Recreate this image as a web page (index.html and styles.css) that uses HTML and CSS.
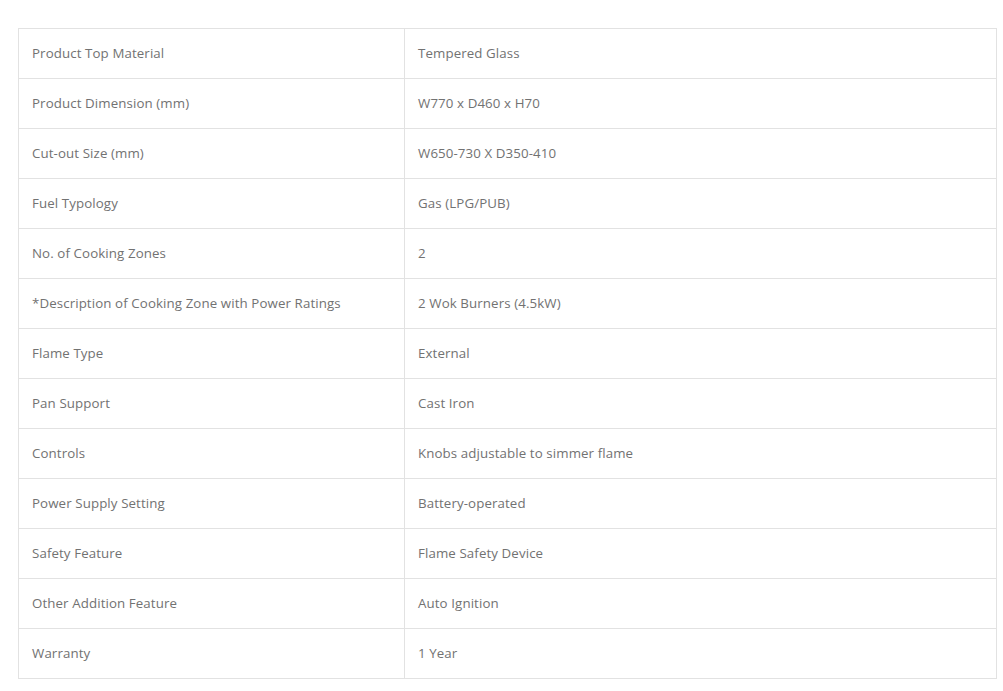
FILE: index.html
```html
<!DOCTYPE html>
<html lang="en">
<head>
    <meta charset="UTF-8">
    <title>Specifications</title>
    <link rel="stylesheet" href="styles.css">
</head>
<body>
<div class="specs">
    <table class="spec-table">
        <colgroup>
            <col class="label-col">
            <col>
        </colgroup>
        <tbody>
        <tr><td>Product Top Material</td><td>Tempered Glass</td></tr>
        <tr><td>Product Dimension (mm)</td><td>W770 x D460 x H70</td></tr>
        <tr><td>Cut-out Size (mm)</td><td>W650-730 X D350-410</td></tr>
        <tr><td>Fuel Typology</td><td>Gas (LPG/PUB)</td></tr>
        <tr><td>No. of Cooking Zones</td><td>2</td></tr>
        <tr><td>*Description of Cooking Zone with Power Ratings</td><td>2 Wok Burners (4.5kW)</td></tr>
        <tr><td>Flame Type</td><td>External</td></tr>
        <tr><td>Pan Support</td><td>Cast Iron</td></tr>
        <tr><td>Controls</td><td>Knobs adjustable to simmer flame</td></tr>
        <tr><td>Power Supply Setting</td><td>Battery-operated</td></tr>
        <tr><td>Safety Feature</td><td>Flame Safety Device</td></tr>
        <tr><td>Other Addition Feature</td><td>Auto Ignition</td></tr>
        <tr><td>Warranty</td><td>1 Year</td></tr>
        </tbody>
    </table>
</div>
</body>
</html>
```

FILE: styles.css
```css
body{
    margin: 0;
    background-color: #ffffff;
    font-family: "Open Sans", "Liberation Sans", sans-serif;
}
.specs{
    padding: 28px 0 0 18px;
}
.spec-table{
    width: 979px;
    border-collapse: collapse;
    table-layout: fixed;
}
.label-col{
    width: 386px;
}
.spec-table td{
    height: 47px;
    padding: 0 0 2px 13px;
    border: 1px solid #e2e2e2;
    font-size: 13.3px;
    letter-spacing: 0.1px;
    color: #727272;
    vertical-align: middle;
}
```
